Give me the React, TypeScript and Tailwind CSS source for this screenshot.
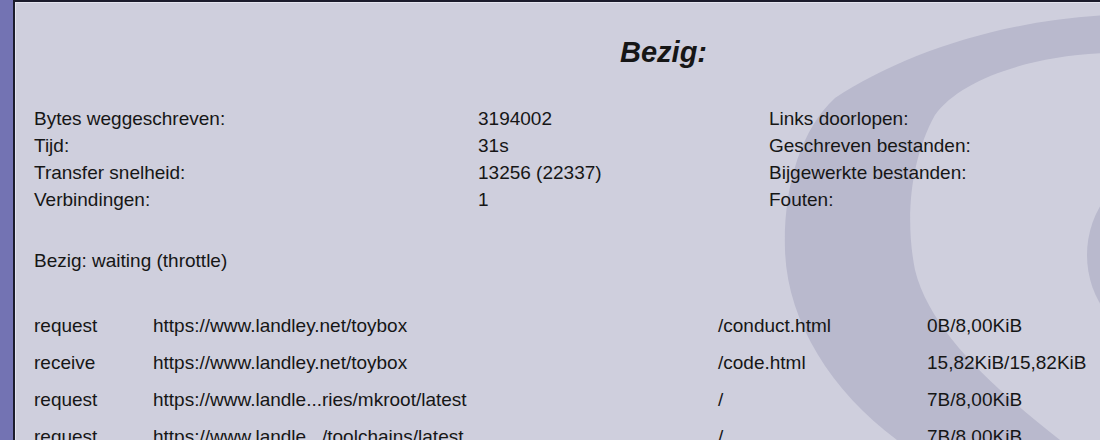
const stats = [
  ["Bytes weggeschreven:", "3194002", "Links doorlopen:"],
  ["Tijd:", "31s", "Geschreven bestanden:"],
  ["Transfer snelheid:", "13256 (22337)", "Bijgewerkte bestanden:"],
  ["Verbindingen:", "1", "Fouten:"],
];

const transfers = [
  ["request", "https://www.landley.net/toybox", "/conduct.html", "0B/8,00KiB"],
  ["receive", "https://www.landley.net/toybox", "/code.html", "15,82KiB/15,82KiB"],
  ["request", "https://www.landle...ries/mkroot/latest", "/", "7B/8,00KiB"],
  ["request", "https://www.landle.../toolchains/latest", "/", "7B/8,00KiB"],
];

function Swirl() {
  return (
    <svg
      className="absolute inset-0 pointer-events-none"
      width="1085"
      height="438"
      viewBox="15 2 1085 438"
    >
      <path
        d="M1110,15 C1000,20 900,55 835,98 C800,130 783,190 785,250 C787,320 830,390 897,440 L1060,440 C990,385 930,330 915,270 C905,220 910,160 935,115 C960,80 1030,55 1110,53 Z"
        fill="#b9b9cd"
      />
      <ellipse cx="1160" cy="255" rx="73" ry="85" fill="#b9b9cd" />
    </svg>
  );
}

export default function App() {
  return (
    <div className="w-[1100px] h-[440px] flex overflow-hidden bg-[#cfcfdd] text-[#161616] font-['Liberation_Sans',Arial,sans-serif]">
      <div className="w-[13px] shrink-0 bg-[#7373b3]" />
      <div className="relative flex-1 border-l-2 border-t-2 border-[#1c1c2c]">
        <div className="absolute inset-0 border-l border-t border-[#e4e4ee]" />
        <Swirl />
        <div className="relative pl-[19px] pt-[32px]">
          <h1 className="pl-[586px] text-[29px] leading-[36px] font-bold italic">
            Bezig:
          </h1>

          <div className="mt-[35px] text-[19px] leading-[27px]">
            {stats.map(([label, value, right]) => (
              <div key={label} className="flex">
                <div className="w-[444px] shrink-0">{label}</div>
                <div className="w-[291px] shrink-0">{value}</div>
                <div>{right}</div>
              </div>
            ))}
          </div>

          <p className="mt-[34px] text-[19px] leading-[27px]">
            Bezig: waiting (throttle)
          </p>

          <div className="mt-[33px] text-[19px] leading-[37px]">
            {transfers.map(([kind, url, path, size], i) => (
              <div key={i} className="flex whitespace-nowrap">
                <div className="w-[119px] shrink-0">{kind}</div>
                <div className="w-[565px] shrink-0">{url}</div>
                <div className="w-[209px] shrink-0">{path}</div>
                <div>{size}</div>
              </div>
            ))}
          </div>
        </div>
      </div>
    </div>
  );
}
